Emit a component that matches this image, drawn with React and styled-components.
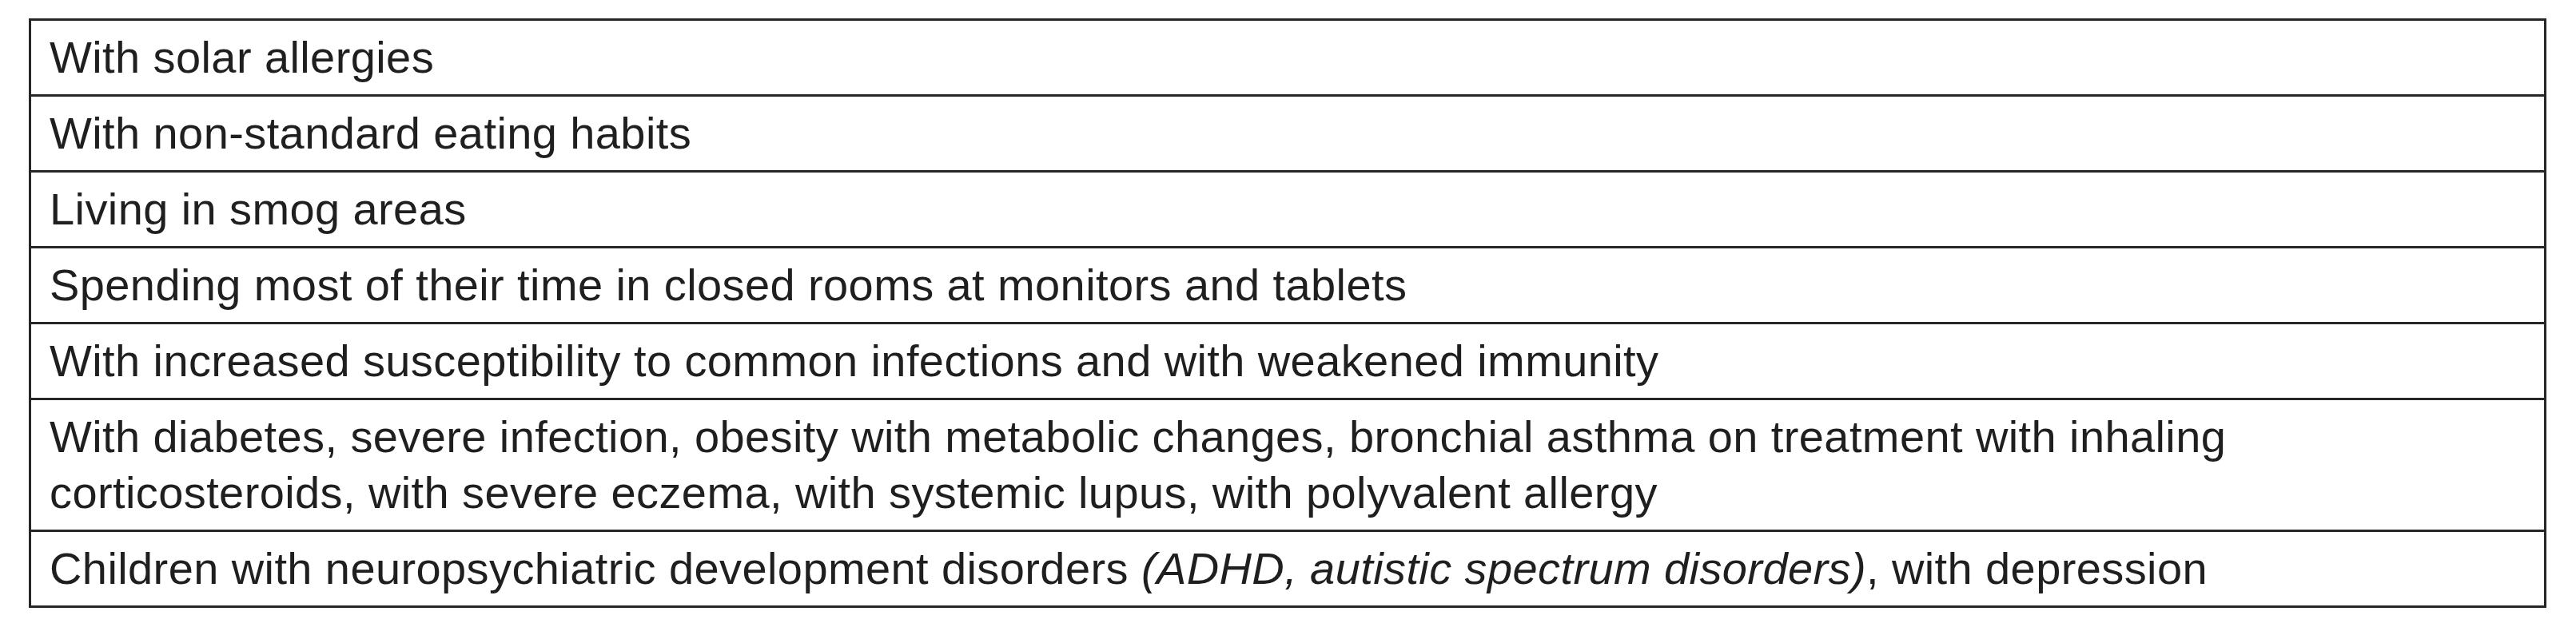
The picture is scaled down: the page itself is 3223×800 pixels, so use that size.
import React from "react";
import styled, { createGlobalStyle } from "styled-components";

const Global = createGlobalStyle`
  html, body {
    margin: 0;
    padding: 0;
    background: #ffffff;
  }
  body {
    font-family: "Liberation Sans", Arial, Helvetica, sans-serif;
    color: #1f1f1f;
  }
`;

const Page = styled.div`
  padding: 23px 37px 0 36px;
  background: #ffffff;
`;

const Table = styled.table`
  width: 100%;
  border-collapse: collapse;
  border: 3px solid #262626;
`;

const Row = styled.tr`
  border-bottom: 3px solid #262626;
  &:last-child {
    border-bottom: none;
  }
`;

const Cell = styled.td`
  padding: 11px 23px 11px 23px;
  font-size: 56px;
  line-height: 70px;
  letter-spacing: 0.4px;
  color: #1f1f1f;
  font-weight: 400;
  vertical-align: top;
`;

const Note = styled.em`
  font-style: italic;
`;

const items = [
  "With solar allergies",
  "With non-standard eating habits",
  "Living in smog areas",
  "Spending most of their time in closed rooms at monitors and tablets",
  "With increased susceptibility to common infections and with weakened immunity",
];

export default function App() {
  return (
    <>
      <Global />
      <Page>
        <Table>
          <tbody>
            {items.map((t) => (
              <Row key={t}>
                <Cell>{t}</Cell>
              </Row>
            ))}
            <Row>
              <Cell>
                With diabetes, severe infection, obesity with metabolic changes, bronchial asthma on treatment with inhaling
                <br />
                corticosteroids, with severe eczema, with systemic lupus, with polyvalent allergy
              </Cell>
            </Row>
            <Row>
              <Cell>
                Children with neuropsychiatric development disorders{" "}
                <Note>(ADHD, autistic spectrum disorders)</Note>, with depression
              </Cell>
            </Row>
          </tbody>
        </Table>
      </Page>
    </>
  );
}
